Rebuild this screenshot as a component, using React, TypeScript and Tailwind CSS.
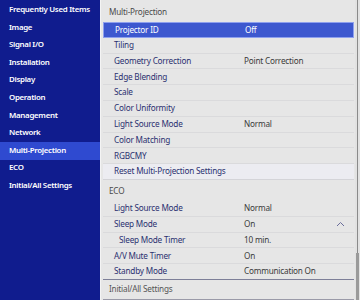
import React from "react";

const leftItems = [
  "Frequently Used Items",
  "Image",
  "Signal I/O",
  "Installation",
  "Display",
  "Operation",
  "Management",
  "Network",
  "Multi-Projection",
  "ECO",
  "Initial/All Settings",
];

type Row = { label: string; value?: string; indent?: boolean; selected?: boolean; light?: boolean; chevron?: boolean };

const multi: Row[] = [
  { label: "Projector ID", value: "Off", selected: true },
  { label: "Tiling" },
  { label: "Geometry Correction", value: "Point Correction" },
  { label: "Edge Blending" },
  { label: "Scale" },
  { label: "Color Uniformity" },
  { label: "Light Source Mode", value: "Normal" },
  { label: "Color Matching" },
  { label: "RGBCMY" },
  { label: "Reset Multi-Projection Settings", light: true },
];

const eco: Row[] = [
  { label: "Light Source Mode", value: "Normal" },
  { label: "Sleep Mode", value: "On", chevron: true },
  { label: "Sleep Mode Timer", value: "10 min.", indent: true },
  { label: "A/V Mute Timer", value: "On" },
  { label: "Standby Mode", value: "Communication On" },
];

function MenuRow({ r, last }: { r: Row; last?: boolean }) {
  return (
    <div
      className={
        "flex items-center h-[15.8px] pl-[11px] text-[8.2px] tracking-[-0.2px] leading-none " +
        (r.selected
          ? "bg-[#3d58cf] text-white border border-[#8ea0ee] "
          : r.light
          ? "bg-[#ececf1] text-[#2a3070] border-b border-[#d4d4d8] "
          : "text-[#2a3070] border-b border-[#dadadc] ") +
        (last ? "border-b-[#7d7f98] " : "")
      }
    >
      <div className={"w-[130px] shrink-0 whitespace-nowrap " + (r.indent ? "pl-[5px]" : "")}>{r.label}</div>
      <div className={"flex-1 whitespace-nowrap " + (r.selected ? "text-white" : "text-[#3a3a3a]")}>{r.value ?? ""}</div>
      {r.chevron && (
        <svg width="9" height="6" viewBox="0 0 9 6" className="mr-[9px]">
          <path d="M1 5 L4.5 1.5 L8 5" fill="none" stroke="#6a6d9a" strokeWidth="1" />
        </svg>
      )}
    </div>
  );
}

export default function App() {
  return (
    <div
      className="w-[360px] h-[300px] flex overflow-hidden bg-[#e6e6e6]"
      style={{ fontFamily: '"Noto Sans", "Open Sans", sans-serif' }}
    >
      <div className="w-[100px] shrink-0 bg-[#101c8e] pt-[1.2px] flex flex-col">
        {leftItems.map((t) => (
          <div
            key={t}
            className={
              "h-[17.6px] flex items-center pl-[9px] text-[7.9px] tracking-[-0.3px] font-semibold text-white whitespace-nowrap leading-none " +
              (t === "Multi-Projection" ? "bg-[#2f4ad0]" : "")
            }
          >
            {t}
          </div>
        ))}
      </div>
      <div className="w-[255px] shrink-0 flex flex-col pl-[2px] pr-[1px] border-l border-[#f4f4f4]">
        <div className="h-[22px] pt-[2px] flex items-center pl-[6px] text-[8.2px] tracking-[-0.2px] text-[#4a4a4a]">Multi-Projection</div>
        {multi.map((r) => (
          <MenuRow key={r.label} r={r} />
        ))}
        <div className="h-[21px] pt-[2px] flex items-center pl-[6px] text-[8.2px] tracking-[-0.2px] text-[#4a4a4a]">ECO</div>
        {eco.map((r, i) => (
          <MenuRow key={r.label} r={r} last={i === eco.length - 1} />
        ))}
        <div className="flex-1 flex items-center pl-[6px] text-[8.2px] tracking-[-0.2px] text-[#555555] border-b border-[#9a9aa8]">
          Initial/All Settings
        </div>
      </div>
      <div className="w-[5px] shrink-0 flex flex-col items-center bg-[#e2e2e2]">
        <div className="w-[1px] h-[253px] bg-[#8a8a8a]" />
        <div className="w-[3px] flex-1 bg-[#9a9a9a]" />
      </div>
    </div>
  );
}
